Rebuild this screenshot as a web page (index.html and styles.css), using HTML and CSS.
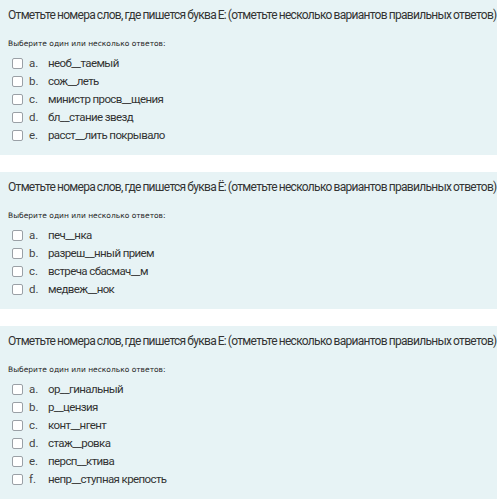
FILE: index.html
```html
<!DOCTYPE html>
<html lang="ru">
<head>
  <meta charset="UTF-8">
  <title>Тест</title>
  <link rel="stylesheet" href="styles.css">
</head>
<body>
  <div class="que">
    <div class="qtext">Отметьте номера слов, где пишется буква Е: (отметьте несколько вариантов правильных ответов)</div>
    <div class="prompt">Выберите один или несколько ответов:</div>
    <div class="answer">
      <label class="opt"><input type="checkbox"><span class="num">a.</span>необ__таемый</label>
      <label class="opt"><input type="checkbox"><span class="num">b.</span>сож__леть</label>
      <label class="opt"><input type="checkbox"><span class="num">c.</span>министр просв__щения</label>
      <label class="opt"><input type="checkbox"><span class="num">d.</span>бл__стание звезд</label>
      <label class="opt"><input type="checkbox"><span class="num">e.</span>расст__лить покрывало</label>
    </div>
  </div>

  <div class="que">
    <div class="qtext">Отметьте номера слов, где пишется буква Ё: (отметьте несколько вариантов правильных ответов)</div>
    <div class="prompt">Выберите один или несколько ответов:</div>
    <div class="answer">
      <label class="opt"><input type="checkbox"><span class="num">a.</span>печ__нка</label>
      <label class="opt"><input type="checkbox"><span class="num">b.</span>разреш__нный прием</label>
      <label class="opt"><input type="checkbox"><span class="num">c.</span>встреча сбасмач__м</label>
      <label class="opt"><input type="checkbox"><span class="num">d.</span>медвеж__нок</label>
    </div>
  </div>

  <div class="que">
    <div class="qtext">Отметьте номера слов, где пишется буква Е: (отметьте несколько вариантов правильных ответов)</div>
    <div class="prompt">Выберите один или несколько ответов:</div>
    <div class="answer">
      <label class="opt"><input type="checkbox"><span class="num">a.</span>ор__гинальный</label>
      <label class="opt"><input type="checkbox"><span class="num">b.</span>р__цензия</label>
      <label class="opt"><input type="checkbox"><span class="num">c.</span>конт__нгент</label>
      <label class="opt"><input type="checkbox"><span class="num">d.</span>стаж__ровка</label>
      <label class="opt"><input type="checkbox"><span class="num">e.</span>персп__ктива</label>
      <label class="opt"><input type="checkbox"><span class="num">f.</span>непр__ступная крепость</label>
    </div>
  </div>
</body>
</html>
```

FILE: styles.css
```css
/* Блоки вопросов теста */
body {
  margin: 0;
  background-color: #fff;
  font-family: Roboto, Arial, sans-serif;
  color: #333;
}
.que {
  background-color: #e7f3f5;
  padding: 7px 0 11px 8px;
  margin-bottom: 17px;
}
.qtext {
  font-size: 12px;
  line-height: 16px;
  letter-spacing: -0.7px;
  word-spacing: -0.5px;
  white-space: nowrap;
}
.prompt {
  font-family: "DejaVu Sans", Verdana, sans-serif;
  font-size: 7.5px;
  line-height: 10px;
  margin-top: 16px;
  color: #222;
}
.answer {
  margin-top: 5px;
}
.opt {
  display: flex;
  align-items: center;
  height: 18px;
  font-size: 11.5px;
  letter-spacing: -0.6px;
}
.opt input[type="checkbox"] {
  appearance: none;
  width: 11px;
  height: 11px;
  margin: 0 6px 0 4px;
  border: 1px solid #9aa0a6;
  border-radius: 2px;
  background-color: #fff;
}
.num {
  width: 19px;
  color: #444;
  letter-spacing: 0;
}
```
